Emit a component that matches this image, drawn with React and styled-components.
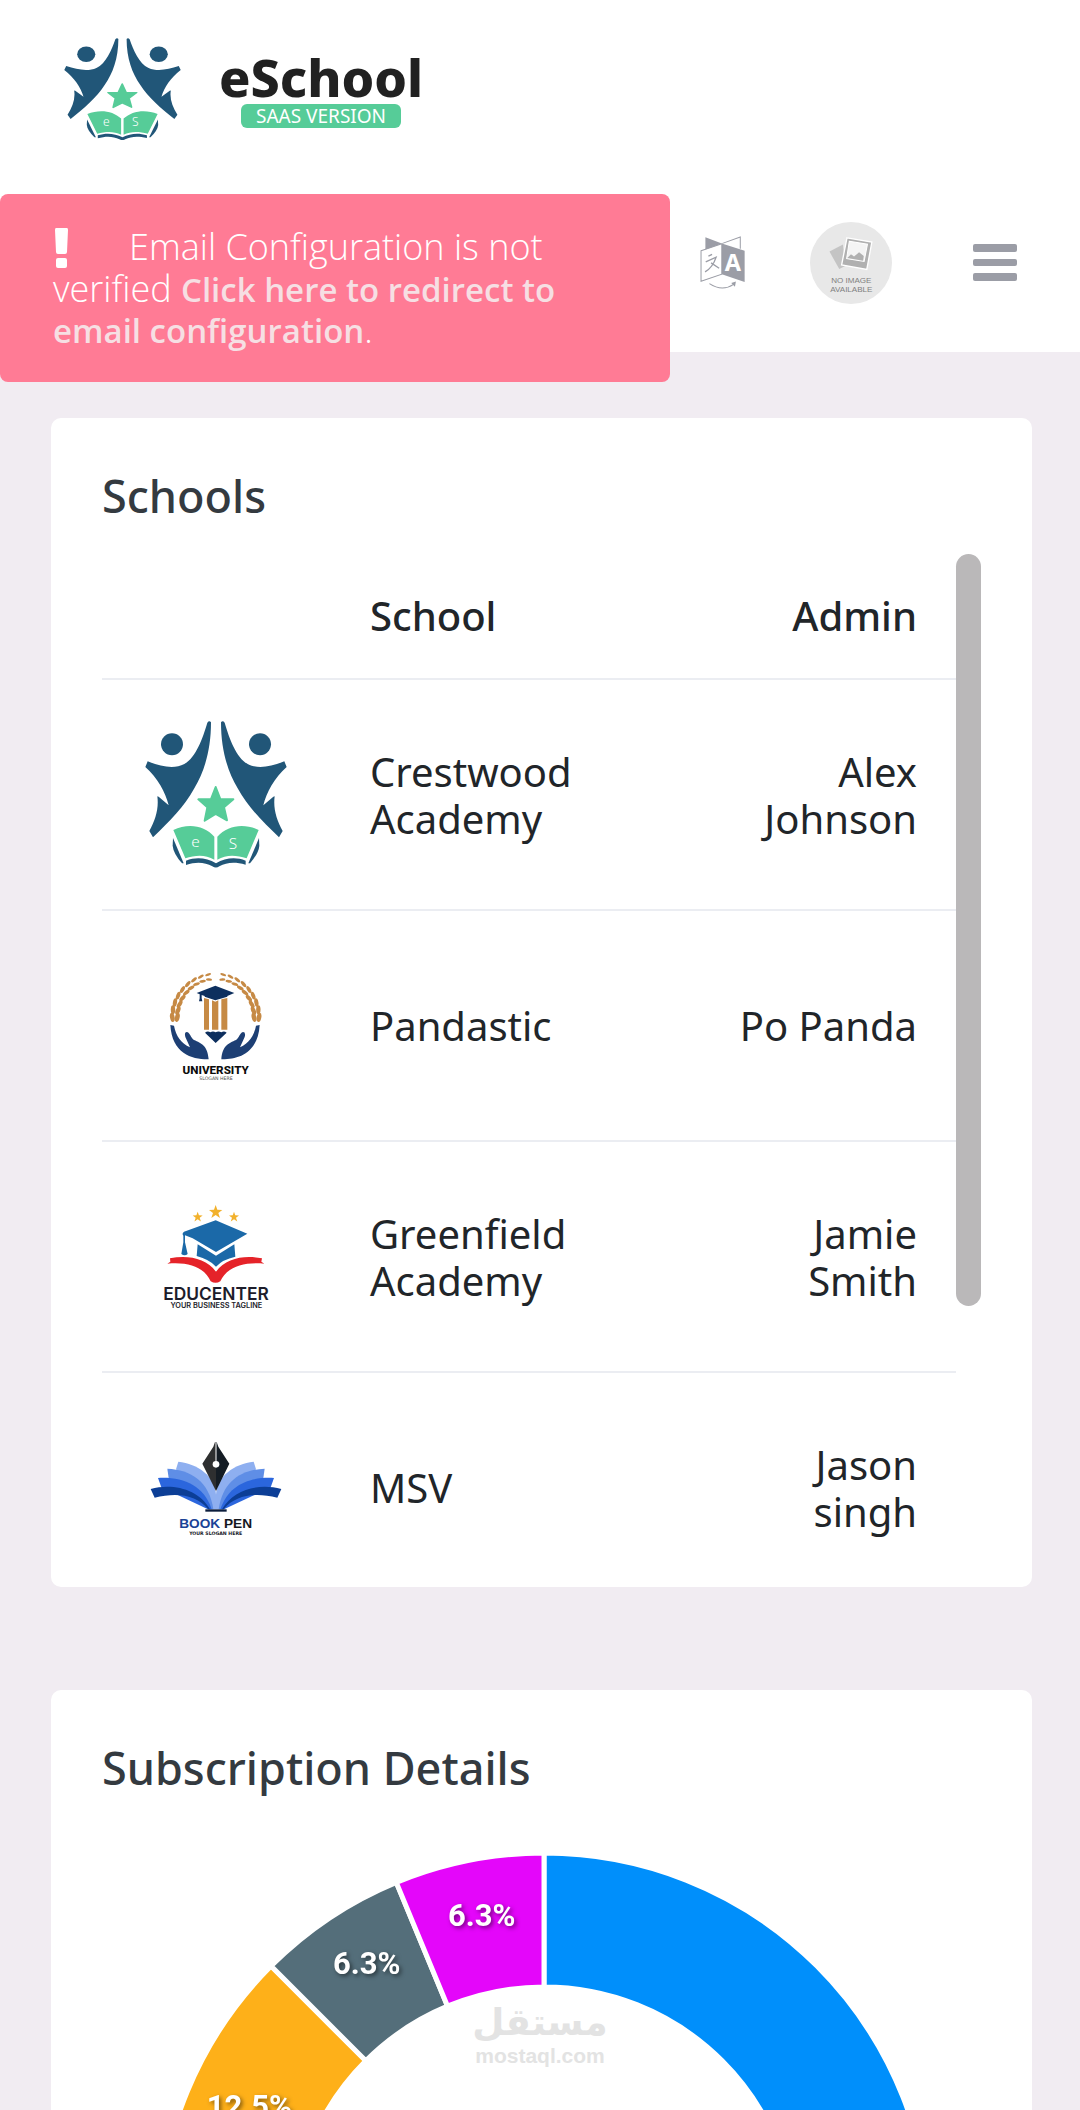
import styled, { createGlobalStyle } from "styled-components";

const GlobalStyle = createGlobalStyle`
  * {
    box-sizing: border-box;
  }
  body {
    margin: 0;
    background: #f1ecf2;
    color: #212529;
    font-family: "Noto Sans", "Open Sans", sans-serif;
  }
`;

const Page = styled.div`
  position: relative;
  height: 100vh;
  overflow-x: hidden;
  overflow-y: auto;
  scrollbar-width: none;
`;

const Header = styled.header`
  background: #fff;
`;

const Brand = styled.a`
  display: flex;
  align-items: center;
  gap: 38px;
  height: 177px;
  padding: 0 64px;
  color: #212121;
  text-decoration: none;

  svg {
    width: 117px;
    height: 102px;
  }
`;

const BrandText = styled.span`
  display: flex;
  flex-direction: column;
  align-items: center;
`;

const BrandName = styled.span`
  font-family: "Noto Sans", sans-serif;
  font-size: 52px;
  font-weight: 800;
  line-height: 54px;
`;

const BrandBadge = styled.span`
  padding: 0 15px;
  border-radius: 6px;
  background: #56cc98;
  color: #fff;
  font-size: 19px;
  line-height: 24px;
`;

const Toolbar = styled.nav`
  display: flex;
  align-items: center;
  justify-content: flex-end;
  height: 175px;
  padding: 0 63px 4px;
`;

const IconButton = styled.button`
  display: flex;
  padding: 0;
  margin-left: ${(props) => props.$gap || 0}px;
  border: none;
  background: none;
  color: #9b9da6;
  cursor: pointer;

  svg {
    width: ${(props) => props.$width}px;
    height: ${(props) => props.$height}px;
  }
`;

const Toast = styled.div`
  position: absolute;
  top: 194px;
  left: 0;
  width: 62%;
  padding: 32px 53px;
  border-radius: 8px;
  background: #ff7b95;
  color: #fff;
  font-family: "Open Sans", "Noto Sans", sans-serif;
  font-size: 36px;
  font-weight: 300;
  line-height: 41px;

  svg {
    width: 16px;
    height: 40px;
    margin-right: 60px;
    vertical-align: -8px;
  }
  a {
    color: #f6dfe3;
    font-size: 33px;
    font-weight: 600;
    line-height: 38px;
    text-decoration: none;
  }
`;

const Content = styled.main`
  display: flex;
  flex-direction: column;
  gap: 103px;
  padding: 66px 48px 66px 51px;
`;

const Card = styled.section`
  padding: 50px 51px 42px;
  border-radius: 10px;
  background: #fff;
`;

const CardTitle = styled.h4`
  margin: 0 0 30px;
  color: #343a40;
  font-size: 45px;
  font-weight: 500;
  line-height: 56px;
`;

const ScrollBox = styled.div`
  display: flex;
  height: 991px;
  overflow: hidden;
`;

const ScrollRail = styled.div`
  flex: 0 0 25px;
`;

const ScrollThumb = styled.div`
  height: 752px;
  border-radius: 13px;
  background: #bab8b9;
`;

const Table = styled.table`
  flex: 1;
  align-self: flex-start;
  table-layout: fixed;
  border-collapse: collapse;
  font-size: 40px;
  line-height: 47px;

  th,
  td {
    padding: 41px 39px 41px 40px;
    border-bottom: 2px solid #ebedf2;
    text-align: left;
    vertical-align: middle;
  }
  th {
    padding-top: 38px;
    padding-bottom: 39px;
    font-weight: 500;
  }
  th:first-child {
    width: 228px;
  }
  th:last-child {
    width: 270px;
  }
  th:last-child,
  td:last-child {
    text-align: right;
  }
  svg {
    display: block;
    width: 147px;
    height: 147px;
  }
`;

const Chart = styled.svg`
  display: block;
  width: 100%;
  margin-top: 56px;
`;

const SliceLabel = styled.text`
  fill: #fff;
  font-family: Roboto, sans-serif;
  font-size: 31px;
  font-weight: 700;
  text-anchor: middle;
  filter: drop-shadow(2px 2px 2px rgba(0, 0, 0, 0.5));
`;

const Watermark = styled.text`
  fill: #e3e3e3;
  font-family: ${(props) => props.$font}, sans-serif;
  font-size: ${(props) => props.$size}px;
  font-weight: 700;
  text-anchor: middle;
`;

const FIGURE =
  "M264 68Q270 60 275 67C275 150 255 215 225 265C195 320 150 365 101 412L90 393C108 360 119 325 114 289L118 290L148 316C138 275 115 235 78 201L85 184C125 200 165 208 195 192C230 172 250 115 264 68Z";

const MarkShapes = () => (
  <>
    <g fill="#215678">
      <path d={FIGURE} />
      <circle cx="158" cy="133" r="33" />
      <g transform="translate(580 0) scale(-1 1)">
        <path d={FIGURE} />
        <circle cx="158" cy="133" r="33" />
        <path d="M161 414L193 490H188Q162 460 160 437Z" />
      </g>
      <path d="M161 414L193 490H188Q162 460 160 437Z" />
      <path d="M200 482C232 470 262 474 290 490C318 474 348 470 379 482V494C345 484 322 487 300 499Q290 506 279 499C257 487 232 484 200 495Z" />
    </g>
    <g fill="#56cc98">
      <path
        d="M289 261L303 297L342 298L314 322L323 361L289 342L256 362L264 322L237 298L275 297Z"
        stroke="#56cc98"
        strokeWidth="6"
        strokeLinejoin="round"
      />
      <path d="M162 390C205 369 255 375 285 410V479C258 463 228 465 198 475Z" />
      <path d="M418 390C375 369 325 375 294 410V479C321 463 351 465 382 475Z" />
    </g>
  </>
);

const BrandMark = () => (
  <svg viewBox="0 0 117 102">
    <g transform="scale(0.2746 0.2323) translate(-77 -63)">
      <MarkShapes />
    </g>
    <g fill="#fff" fontFamily="Noto Sans" fontSize="12" fontWeight="300">
      <text x="39" y="88">e</text>
      <text x="68" y="88">S</text>
    </g>
  </svg>
);

const CrestwoodLogo = () => (
  <svg viewBox="68 63 441 441">
    <MarkShapes />
    <g fill="#fff" fontFamily="Noto Sans" fontSize="46" fontWeight="300">
      <text x="216" y="442">e</text>
      <text x="328" y="446">S</text>
    </g>
  </svg>
);

const HAND =
  "M93 228L104 230C110 262 126 283 152 295L138 264Q134 249 143 249C154 253 153 265 164 273C186 283 205 290 208 331C160 332 98 315 93 228Z";

const leaves = Array.from({ length: 9 }, (_, i) => i * 10);

const Wreath = () =>
  leaves.map((angle, i) => {
    const length = 14 - i * 0.6;
    const width = 7 - i * 0.4;
    return (
      <g key={angle} transform={`rotate(${angle} 229 205)`}>
        <ellipse cx="99" cy="205" rx={width} ry={length} transform="rotate(-10 99 205)" />
        <ellipse cx="114" cy="205" rx={width} ry={length} transform="rotate(12 114 205)" />
      </g>
    );
  });

const UniversityLogo = () => (
  <svg viewBox="8 9 441 441">
    <g fill="#c68a45">
      <Wreath />
      <g transform="translate(458 0) scale(-1 1)">
        <Wreath />
      </g>
      <path d="M194 147L209 151V242H194ZM218 154L228 158L237 154V242H218ZM246 151L264 147V242H246Z" />
    </g>
    <g fill="#1d3f74">
      <path d={HAND} />
      <path d={HAND} transform="translate(454 0) scale(-1 1)" />
    </g>
    <g fill="#0d2f5e">
      <path d="M172 132L228 110L285 132L264 141V143L228 154L196 143V141L187 138V148L189 157H179L181 148V136Z" />
      <path d="M197 251Q205 245 213 250Q221 245 229 250Q237 245 246 250Q254 245 262 251L229 282Z" />
    </g>
    <g textAnchor="middle">
      <text x="229" y="375" fontFamily="Roboto" fontSize="35" fontWeight="800" fill="#0c0c0c">
        UNIVERSITY
      </text>
      <text x="230" y="393" fontFamily="DejaVu Sans" fontSize="14" fill="#555">
        SLOGAN HERE
      </text>
    </g>
  </svg>
);

const STAR = "M0 -21L5 -7L20 -6L8 3L13 18L0 9L-13 18L-8 3L-20 -6L-5 -7Z";

const EducenterLogo = () => (
  <svg viewBox="8 -15 441 441">
    <g fill="#f2b12c">
      <path d={STAR} transform="translate(229 72)" />
      <path d={STAR} transform="translate(175 87) scale(0.75)" />
      <path d={STAR} transform="translate(284 87) scale(0.75)" />
    </g>
    <g fill="#1b69a8">
      <path d="M229 97L324 137L230 192L160 151L137 142V163L145 198Q136 206 126 198L132 163V143Q127 136 134 131Z" />
      <path d="M175 169L230 203L285 169L288 206Q250 214 230 236Q210 214 172 204Z" />
    </g>
    <path
      fill="#e52329"
      d="M92 211C145 201 200 210 230 251C260 210 315 201 368 211L366 221L375 227C310 221 262 238 243 280Q229 289 214 280C195 238 150 221 84 227L93 221Z"
    />
    <g textAnchor="middle" fill="#1d1d2b" fontFamily="Inter" fontWeight="600">
      <text x="230" y="337" fontSize="52">
        EDUCENTER
      </text>
      <text x="231" y="361" fontSize="22">
        YOUR BUSINESS TAGLINE
      </text>
    </g>
  </svg>
);

const BookPages = () => (
  <>
    <path fill="#8eaff0" d="M147 131C205 137 258 175 260 230V274H244L140 154Z" />
    <path fill="#5f8ee6" d="M114 152C185 155 240 190 252 274H240L118 180Z" />
    <path fill="#2b66dd" d="M86 180C160 176 222 200 247 274H236L96 208Z" />
    <path fill="#0c3e96" d="M64 213C130 195 208 213 242 274H237C203 230 142 222 76 239Z" />
  </>
);

const BookPenLogo = () => (
  <svg viewBox="38 -12 441 441">
    <BookPages />
    <g transform="translate(520 0) scale(-1 1)">
      <BookPages />
    </g>
    <path fill="#2e2f30" d="M257 72L252 86L219 137L260 219V72Z" />
    <path fill="#141c24" d="M262 72L267 86L300 137L260 219V72Z" />
    <path stroke="#fff" strokeWidth="3" d="M260 70V136" />
    <circle cx="260" cy="139" r="10" fill="#fff" />
    <rect x="228" y="274" width="64" height="7" fill="#0c1d3c" />
    <g textAnchor="middle" fontWeight="700">
      <text x="259" y="329" fontFamily="Liberation Sans" fontSize="41" fill="#15181f">
        <tspan fill="#1b4396">BOOK</tspan> PEN
      </text>
      <text x="259" y="351" fontFamily="DejaVu Sans" fontSize="14" fill="#15181f">
        YOUR SLOGAN HERE
      </text>
    </g>
  </svg>
);

const TranslateIcon = () => (
  <svg viewBox="122 106 134 158">
    <path fill="currentColor" d="M138 110L187 128L138 146ZM187 128L255 150V243L187 220Z" />
    <g fill="none" stroke="currentColor" strokeWidth="3">
      <path d="M189 128L242 109V144M125 150L187 129V220L125 241Z" />
      <path d="M147 166L158 161M139 183L170 169Q160 200 137 213M155 186L179 202" strokeWidth="4" />
      <path d="M150 248Q188 273 222 250" />
    </g>
    <path fill="currentColor" d="M229 242L226 257L215 246Z" />
    <text x="220" y="210" fill="#fff" fontFamily="Noto Sans" fontSize="70" fontWeight="700" textAnchor="middle">
      A
    </text>
  </svg>
);

const NoImageAvatar = () => (
  <svg viewBox="451 67 244 244">
    <circle cx="573" cy="189" r="122" fill="#e8e8e8" />
    <path fill="#c4c4c4" d="M509 155L549 134L556 198L538 207Z" />
    <path fill="#b0b0b0" stroke="#fff" strokeWidth="4" d="M561 114L635 127L620 208L545 195Z" />
    <path fill="#f4f4f4" stroke="#fff" strokeWidth="3" d="M568 124L622 133L612 184L560 176Z" />
    <path fill="#b0b0b0" d="M562 174L573 163L582 170L597 157L611 168L609 182Z" />
    <g fill="#808080" fontFamily="Liberation Sans" fontSize="24" textAnchor="middle">
      <text x="574" y="248">NO IMAGE</text>
      <text x="574" y="275">AVAILABLE</text>
    </g>
  </svg>
);

const MenuIcon = () => (
  <svg viewBox="0 0 44 37" fill="currentColor">
    <rect width="44" height="8" rx="2" />
    <rect y="15" width="44" height="7" rx="2" />
    <rect y="29" width="44" height="8" rx="2" />
  </svg>
);

const ExclamationIcon = () => (
  <svg viewBox="0 0 16 40" fill="currentColor">
    <path d="M3 0H14Q15 0 15 2L14 24Q14 26 12 26H5Q3 26 3 24L2 2Q2 0 3 0Z" />
    <rect x="3" y="30" width="11" height="10" rx="2" />
  </svg>
);

const schools = [
  { Logo: CrestwoodLogo, name: "Crestwood Academy", admin: "Alex Johnson" },
  { Logo: UniversityLogo, name: "Pandastic", admin: "Po Panda" },
  { Logo: EducenterLogo, name: "Greenfield Academy", admin: "Jamie Smith" },
  { Logo: BookPenLogo, name: "MSV", admin: "Jason singh" },
];

const slices = [
  { color: "#008ffb", value: 50 },
  { color: "#00e396", value: 25 },
  { color: "#feb019", value: 12.5, label: "12.5%" },
  { color: "#546e7a", value: 6.25, label: "6.3%" },
  { color: "#e406fa", value: 6.25, label: "6.3%" },
];

const CENTER = { x: 442, y: 387 };
const OUTER = 386;
const INNER = 252;

function point(radius, percent) {
  const angle = (percent / 100) * Math.PI * 2;
  return [CENTER.x + radius * Math.sin(angle), CENTER.y - radius * Math.cos(angle)];
}

function slicePath(start, end) {
  return [
    `M${point(OUTER, start)}`,
    `A${OUTER} ${OUTER} 0 0 1 ${point(OUTER, end)}`,
    `L${point(INNER, end)}`,
    `A${INNER} ${INNER} 0 0 0 ${point(INNER, start)}Z`,
  ].join("");
}

const SubscriptionChart = () => {
  let total = 0;
  const parts = slices.map((slice) => {
    const start = total;
    total += slice.value;
    return { ...slice, start, end: total };
  });

  return (
    <Chart viewBox="0 0 879 780">
      {parts.map((part) => (
        <path
          key={part.start}
          d={slicePath(part.start, part.end)}
          fill={part.color}
          stroke="#fff"
          strokeWidth="5"
        />
      ))}
      {parts
        .filter((part) => part.label)
        .map((part) => {
          const [x, y] = point((OUTER + INNER) / 2, (part.start + part.end) / 2);
          return (
            <SliceLabel key={part.start} x={x} y={y}>
              {part.label}
            </SliceLabel>
          );
        })}
      <Watermark x="438" y="183" $font="DejaVu Sans" $size="37">
        مستقل
      </Watermark>
      <Watermark x="438" y="211" $font="Liberation Sans" $size="21">
        mostaql.com
      </Watermark>
    </Chart>
  );
};

const App = () => {
  return (
    <>
      <GlobalStyle />
      <Page>
        <Header>
          <Brand href="#">
            <BrandMark />
            <BrandText>
              <BrandName>eSchool</BrandName>
              <BrandBadge>SAAS VERSION</BrandBadge>
            </BrandText>
          </Brand>
          <Toolbar>
            <IconButton aria-label="Language" $width={45} $height={53}>
              <TranslateIcon />
            </IconButton>
            <IconButton aria-label="Profile" $width={82} $height={82} $gap={65}>
              <NoImageAvatar />
            </IconButton>
            <IconButton aria-label="Menu" $width={44} $height={37} $gap={81}>
              <MenuIcon />
            </IconButton>
          </Toolbar>
        </Header>
        <Toast role="alert">
          <ExclamationIcon />
          Email Configuration is not verified{" "}
          <a href="#">Click here to redirect to email configuration</a>.
        </Toast>
        <Content>
          <Card>
            <CardTitle>Schools</CardTitle>
            <ScrollBox>
              <Table>
                <thead>
                  <tr>
                    <th></th>
                    <th>School</th>
                    <th>Admin</th>
                  </tr>
                </thead>
                <tbody>
                  {schools.map(({ Logo, name, admin }) => (
                    <tr key={name}>
                      <td>
                        <Logo />
                      </td>
                      <td>{name}</td>
                      <td>{admin}</td>
                    </tr>
                  ))}
                </tbody>
              </Table>
              <ScrollRail>
                <ScrollThumb />
              </ScrollRail>
            </ScrollBox>
          </Card>
          <Card>
            <CardTitle>Subscription Details</CardTitle>
            <SubscriptionChart />
          </Card>
        </Content>
      </Page>
    </>
  );
};

export default App;
